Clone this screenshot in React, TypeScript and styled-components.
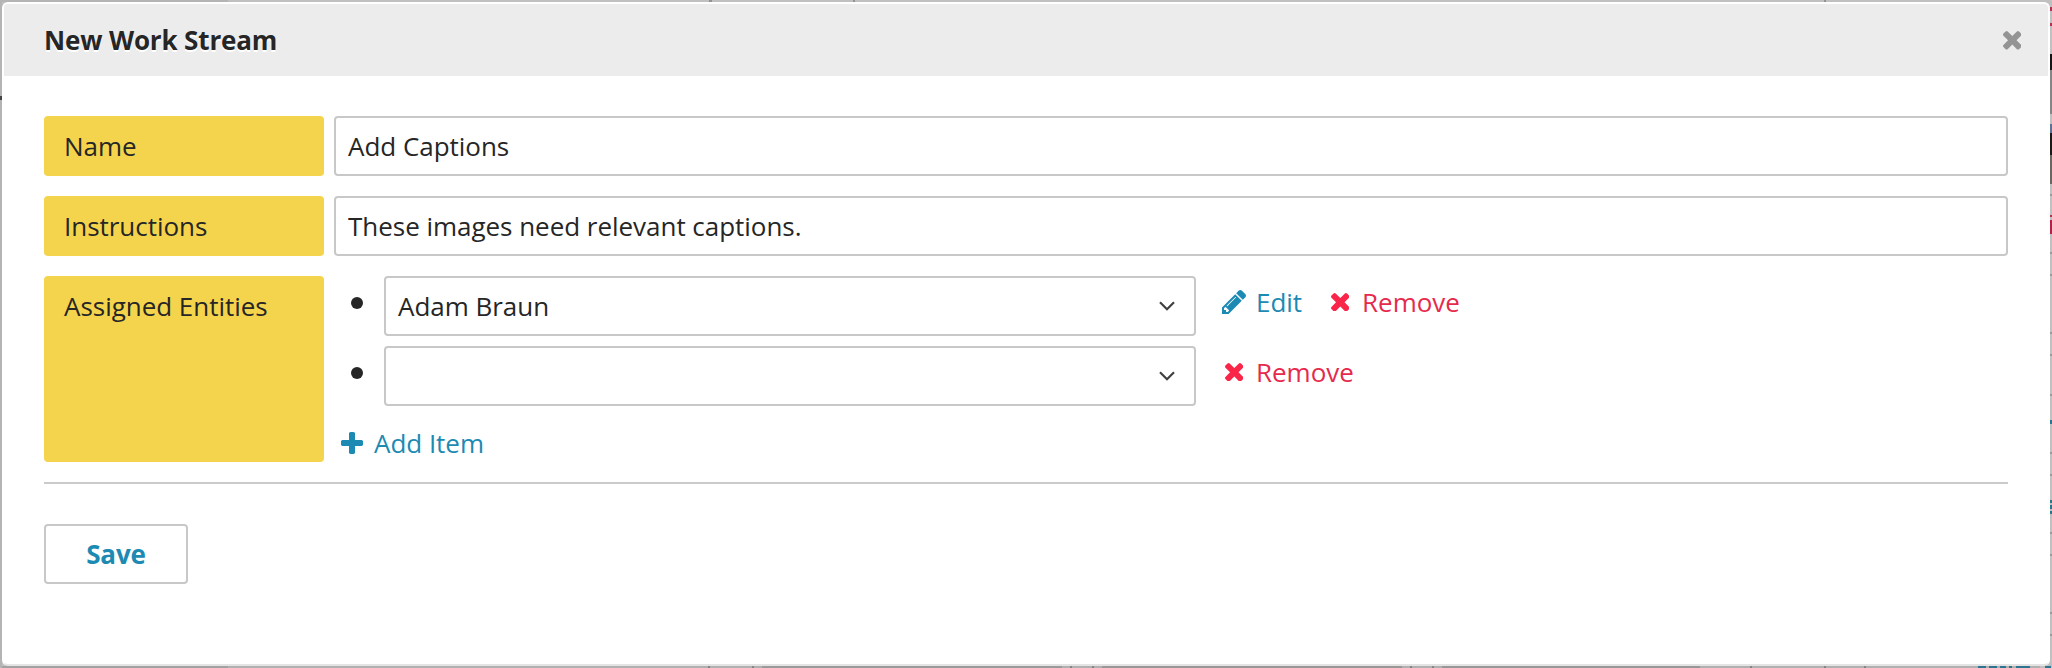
import React from 'react';
import styled, { createGlobalStyle } from 'styled-components';

const Global = createGlobalStyle`
  *, *::before, *::after { box-sizing: border-box; }
  body { margin: 0; background: #bebebe; }
`;

const Backdrop = styled.div`
  position: relative;
  width: 2052px;
  height: 668px;
  padding: 2px;
  overflow: hidden;
  background:
    linear-gradient(#b4b4b4, #b4b4b4) 0 0 / 2px 100% no-repeat,
    linear-gradient(#b4b4b4, #b4b4b4) 0 0 / 228px 2px no-repeat,
    linear-gradient(#a2a2a2, #a2a2a2) 0 100% / 228px 2px no-repeat,
    linear-gradient(#b0b0b0, #b0b0b0) 0 100% / 2040px 2px no-repeat,
    #c0c0c0;
  font-family: 'Open Sans', sans-serif;
  font-size: 26px;
  line-height: 36px;
  letter-spacing: -0.03px;
  color: #262626;
`;

const PageMark = styled.span<{ $x: number; $y: number; $w: number; $h: number; $color: string }>`
  position: absolute;
  left: ${(p) => p.$x}px;
  top: ${(p) => p.$y}px;
  width: ${(p) => p.$w}px;
  height: ${(p) => p.$h}px;
  background: ${(p) => p.$color};
`;

const Dialog = styled.section`
  position: relative;
  height: 664px;
  border: 2px solid #fff;
  border-bottom-color: #e4e4e4;
  border-radius: 6px;
  background: #fff;
`;

const Header = styled.header`
  display: flex;
  align-items: center;
  justify-content: space-between;
  height: 72px;
  padding: 0 26.7px 0 40px;
  border-radius: 4px 4px 0 0;
  background: #ececec;
`;

const Title = styled.h1`
  margin: 0;
  font-size: 26px;
  font-weight: 700;
  letter-spacing: -0.15px;
  text-shadow: 0 2px 0 #fff;
`;

const CloseButton = styled.button`
  display: flex;
  padding: 0;
  margin-top: 1px;
  border: 0;
  background: none;
  color: #949494;
`;

const Form = styled.form`
  display: flex;
  flex-direction: column;
  gap: 20px;
  padding: 40px;
`;

const Field = styled.div`
  display: grid;
  grid-template-columns: 280px 1fr;
  column-gap: 10px;
`;

const Label = styled.label`
  padding: 12px 20px;
  border-radius: 4px;
  background: #f5d44d;
`;

const Input = styled.input`
  width: 100%;
  height: 60px;
  padding: 0 12px;
  border: 2px solid #c8c8c8;
  border-radius: 4px;
  background: #fff;
  font: inherit;
  letter-spacing: inherit;
  color: inherit;
  outline: 0;
`;

const Entities = styled.div`
  display: flex;
  flex-direction: column;
  height: 186px;
`;

const EntityList = styled.ul`
  display: flex;
  flex-direction: column;
  gap: 10px;
  margin: 0;
  padding: 0 0 0 17px;
  list-style: none;
`;

const Entity = styled.li`
  display: flex;
  align-items: flex-start;
  height: 60px;
`;

const Bullet = styled.span`
  width: 12px;
  height: 12px;
  margin: 21px 21px 0 0;
  border-radius: 50%;
  background: #262626;
`;

const Select = styled.div`
  display: flex;
  align-items: center;
  justify-content: space-between;
  width: 812px;
  height: 60px;
  padding: 0 19px 0 12px;
  border: 2px solid #c8c8c8;
  border-radius: 4px;
`;

const Actions = styled.div`
  display: flex;
  align-items: center;
  gap: 24px;
  height: 52px;
  margin-left: 24px;
`;

const Action = styled.a<{ $danger?: boolean }>`
  display: flex;
  align-items: center;
  color: ${(p) => (p.$danger ? '#e62a4c' : '#1c8ab3')};
`;

const IconSlot = styled.span<{ $color?: string }>`
  display: flex;
  align-items: center;
  justify-content: center;
  width: 28px;
  height: 36px;
  margin-right: 8px;
  color: ${(p) => p.$color ?? 'inherit'};
`;

const AddRow = styled.div`
  display: flex;
  margin: 19px 0 0 4px;
`;

const Footer = styled.footer`
  padding-top: 40px;
  border-top: 2px solid #cacaca;
`;

const SaveButton = styled.button`
  display: block;
  width: 144px;
  height: 60px;
  padding: 0;
  border: 2px solid #c8c8c8;
  border-radius: 4px;
  background: #fff;
  font: inherit;
  font-weight: 700;
  letter-spacing: -0.15px;
  color: #1c8ab3;
`;

const Cross = () => (
  <svg width="18.6" height="18.6" viewBox="302 366 1188 1188" fill="currentColor">
    <path d="M1490 1322q0 40-28 68l-136 136q-28 28-68 28t-68-28l-294-294-294 294q-28 28-68 28t-68-28l-136-136q-28-28-28-68t28-68l294-294-294-294q-28-28-28-68t28-68l136-136q28-28 68-28t68 28l294 294 294-294q28-28 68-28t68 28l136 136q28 28 28 68t-28 68l-294 294 294 294q28 28 28 68z" />
  </svg>
);

const Plus = () => (
  <svg width="22" height="22" viewBox="192 128 1408 1408" fill="currentColor">
    <path d="M1600 736v192q0 40-28 68t-68 28h-416v416q0 40-28 68t-68 28h-192q-40 0-68-28t-28-68v-416h-416q-40 0-68-28t-28-68v-192q0-40 28-68t68-28h416v-416q0-40 28-68t68-28h192q40 0 68 28t28 68v416h416q40 0 68 28t28 68z" />
  </svg>
);

const Pencil = () => (
  <svg width="24" height="24" viewBox="128 149 1515 1515" fill="currentColor">
    <path d="M491 1536l91-91-235-235-91 91v107h128v128h107zm523-928q0-22-22-22-10 0-17 7l-542 542q-7 7-7 17 0 22 22 22 10 0 17-7l542-542q7-7 7-17zm-54-192l416 416-832 832h-416v-416zm683 96q0 53-37 90l-166 166-416-416 166-165q36-38 90-38 53 0 91 38l235 234q37 39 37 91z" />
  </svg>
);

const Chevron = () => (
  <svg width="16" height="10" viewBox="0 0 16 10" fill="none" stroke="#404040" strokeWidth="2.2">
    <path d="M1 1.2 8 8.2 15 1.2" />
  </svg>
);

const RemoveAction = () => (
  <Action $danger>
    <IconSlot $color="#f9264a"><Cross /></IconSlot>
    Remove
  </Action>
);

type Mark = [x: number, y: number, w: number, h: number, color: string];

const edgeLines = [194, 252, 274, 332, 354, 394, 452, 474, 532, 554, 612, 634];

/* Slivers of the dimmed page that stay visible around the dialog. */
const pageMarks: Mark[] = [
  [0, 96, 2, 4, '#444'],
  [709, 0, 3, 2, '#929292'],
  [853, 0, 2, 2, '#929292'],
  [1824, 0, 2, 2, '#929292'],
  [2050, 7, 2, 4, '#b83050'],
  [2050, 23, 2, 3, '#b83050'],
  [2050, 54, 2, 16, '#151515'],
  [2050, 70, 2, 44, '#858585'],
  [2050, 124, 2, 9, '#5a7396'],
  [2050, 133, 2, 22, '#1c1a18'],
  [2050, 155, 2, 29, '#6c6660'],
  [2050, 215, 2, 2, '#b83050'],
  [2050, 220, 2, 14, '#b02546'],
  [2050, 420, 2, 4, '#2b7590'],
  [2050, 500, 2, 3, '#2b7590'],
  [2050, 505, 2, 4, '#2b7590'],
  [2050, 511, 2, 3, '#2b7590'],
  ...edgeLines.map((y): Mark => [2050, y, 2, 2, '#999']),
  [762, 666, 300, 2, '#9a9a9a'],
  [1102, 666, 300, 2, '#9a9696'],
  [1442, 666, 258, 2, '#989696'],
  ...[708, 752, 1070, 1092, 1410, 1432, 1750, 1824, 1864].map((x): Mark => [x, 666, 2, 2, '#868686']),
  [1978, 666, 8, 2, '#2b7590'],
  [1989, 666, 8, 2, '#2b7590'],
  [2000, 666, 6, 2, '#2b7590'],
  [2009, 666, 3, 2, '#2b7590'],
  [2016, 666, 14, 2, '#2b7590'],
  [2045, 666, 6, 2, '#2b7590'],
];

export default function App() {
  return (
    <>
      <Global />
      <Backdrop>
        {pageMarks.map(([x, y, w, h, color]) => (
          <PageMark key={`${x}-${y}`} $x={x} $y={y} $w={w} $h={h} $color={color} />
        ))}
        <Dialog>
          <Header>
            <Title>New Work Stream</Title>
            <CloseButton type="button" aria-label="Close"><Cross /></CloseButton>
          </Header>
          <Form>
            <Field>
              <Label>Name</Label>
              <Input defaultValue="Add Captions" />
            </Field>
            <Field>
              <Label>Instructions</Label>
              <Input defaultValue="These images need relevant captions." />
            </Field>
            <Field>
              <Label>Assigned Entities</Label>
              <Entities>
                <EntityList>
                  <Entity>
                    <Bullet />
                    <Select><span>Adam Braun</span><Chevron /></Select>
                    <Actions>
                      <Action><IconSlot><Pencil /></IconSlot>Edit</Action>
                      <RemoveAction />
                    </Actions>
                  </Entity>
                  <Entity>
                    <Bullet />
                    <Select><span /><Chevron /></Select>
                    <Actions><RemoveAction /></Actions>
                  </Entity>
                </EntityList>
                <AddRow>
                  <Action><IconSlot><Plus /></IconSlot>Add Item</Action>
                </AddRow>
              </Entities>
            </Field>
            <Footer>
              <SaveButton type="button">Save</SaveButton>
            </Footer>
          </Form>
        </Dialog>
      </Backdrop>
    </>
  );
}
